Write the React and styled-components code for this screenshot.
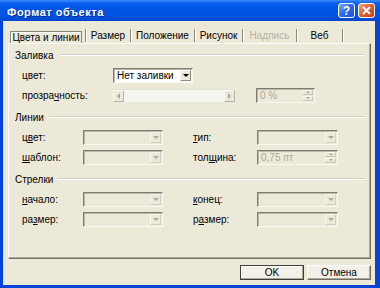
import React from 'react'
import styled, { createGlobalStyle } from 'styled-components'

const GlobalStyle = createGlobalStyle`
  html, body { margin: 0; padding: 0; background: #fff; }
  body { font-family: "Liberation Sans", Arial, sans-serif; font-size: 10px; color: #000; }
`

const Window = styled.div`
  width: 380px;
  height: 288px;
  display: flex;
  flex-direction: column;
  background: #0842D6;
`

const TitleBar = styled.div`
  height: 21px;
  flex: none;
  display: flex;
  align-items: center;
  padding: 0 5px 0 7px;
  background: linear-gradient(180deg, #3D8BF7 0%, #0A5FEF 15%, #0055E5 40%, #0053E2 75%, #0245CC 100%);
  color: #fff;
`

const Title = styled.div`
  flex: 1;
  padding-top: 3px;
  font: bold 11px "Liberation Sans", Arial, sans-serif;
  letter-spacing: 0.5px;
  text-shadow: 1px 1px 0 #0B2A8F;
`

const CaptionButton = styled.div`
  width: 17px;
  height: 15px;
  margin-left: 3px;
  box-sizing: border-box;
  border: 1px solid #fff;
  border-radius: 3px;
  display: flex;
  align-items: center;
  justify-content: center;
  color: #fff;
  font: bold 12px "Liberation Sans", Arial, sans-serif;
  background: ${p => p.$close
    ? 'linear-gradient(135deg, #F4A183 0%, #E2602F 45%, #C63C1B 100%)'
    : 'linear-gradient(135deg, #7FB0FF 0%, #2E6EF2 45%, #1B4FD8 100%)'};
`

const Frame = styled.div`
  flex: 1;
  display: flex;
  flex-direction: column;
  margin: 0 5px 3px 3px;
  padding: 7px 4px 5px 5px;
  background: #ECE9D8;
`

const TabRow = styled.div`
  height: 15px;
  flex: none;
  display: flex;
`

const Tab = styled.div`
  width: ${p => p.$w}px;
  height: 13px;
  margin-top: 1px;
  box-sizing: border-box;
  display: flex;
  align-items: center;
  justify-content: center;
  border-right: 1px solid #8C8A7E;
  box-shadow: 1px 0 0 #fff;
  color: ${p => p.$disabled ? '#B5B2A3' : '#000'};
  white-space: nowrap;
`

const TabLabel = styled.span`
  ${p => p.$active && `
    flex: 1;
    align-self: stretch;
    margin: 2px 3px -2px 2px;
    border: 1px solid #8A887C;
    box-shadow: inset 1px 1px 0 #fff;
    text-align: center;
    line-height: 11px;
  `}
`

const Panel = styled.div`
  flex: 1;
  box-sizing: border-box;
  padding: 5px 5px 0 6px;
  border-left: 1px solid #fff;
  border-top: 1px solid #fff;
  border-right: 1px solid #716F64;
  border-bottom: 1px solid #716F64;
  box-shadow: inset -1px -1px 0 #ACA899;
`

const Group = styled.div`
  margin-bottom: 6px;
`

const GroupHeader = styled.div`
  height: 12px;
  margin-bottom: 4px;
  display: flex;
  align-items: center;
  gap: 5px;
  &::after {
    content: '';
    flex: 1;
    border-top: 1px solid #D0CEBF;
    border-bottom: 1px solid #fff;
  }
`

const Row = styled.div`
  height: 20px;
  padding-left: 7px;
  display: grid;
  grid-template-columns: ${p => p.$cols};
  align-items: center;
`

const Label = styled.span`
  white-space: nowrap;
`

const Box = styled.div`
  width: ${p => p.$w}px;
  height: 15px;
  box-sizing: border-box;
  display: flex;
  border: 1px solid;
  border-color: #7F7D72 #FAF9F4 #FAF9F4 #7F7D72;
  box-shadow: inset 1px 1px 0 #B9B6A7;
  background: ${p => p.$disabled ? '#ECE9D8' : '#fff'};
  color: ${p => p.$disabled ? '#ACA899' : '#000'};
`

const BoxText = styled.span`
  flex: 1;
  padding: 0 3px;
  line-height: 13px;
  white-space: nowrap;
  overflow: hidden;
`

const ArrowButton = styled.span`
  width: 11px;
  margin: 1px 1px 1px 0;
  box-sizing: border-box;
  display: flex;
  align-items: center;
  justify-content: center;
  border: 1px solid;
  border-color: ${p => p.$disabled ? '#F7F6F0 #D2CFC1 #D2CFC1 #F7F6F0' : '#fff #8E8C80 #8E8C80 #fff'};
  background: #ECE9D8;
  &::before {
    content: '';
    border-left: 3px solid transparent;
    border-right: 3px solid transparent;
    border-top: 3px solid ${p => p.$disabled ? '#ACA899' : '#000'};
  }
`

const SpinButtons = styled.span`
  width: 11px;
  margin: 1px 1px 1px 0;
  display: flex;
  flex-direction: column;
  gap: 1px;
`

const SpinHalf = styled.span`
  flex: 1;
  box-sizing: border-box;
  display: flex;
  align-items: center;
  justify-content: center;
  border: 1px solid;
  border-color: #F7F6F0 #C9C6B8 #C9C6B8 #F7F6F0;
  &::before {
    content: '';
    border-left: 2px solid transparent;
    border-right: 2px solid transparent;
    ${p => p.$down ? 'border-top' : 'border-bottom'}: 2px solid #ACA899;
  }
`

const Scroll = styled.div`
  width: 122px;
  height: 13px;
  display: flex;
  justify-content: space-between;
  background: #F6F5EF;
  border-top: 1px solid #E4E1D4;
  box-sizing: border-box;
`

const ScrollButton = styled.span`
  width: 11px;
  box-sizing: border-box;
  display: flex;
  align-items: center;
  justify-content: center;
  background: #ECE9D8;
  border: 1px solid;
  border-color: #FBFAF6 #B6B3A4 #B6B3A4 #FBFAF6;
  &::before {
    content: '';
    border-top: 3px solid transparent;
    border-bottom: 3px solid transparent;
    ${p => p.$right ? 'border-left' : 'border-right'}: 3px solid #ACA899;
  }
`

const ButtonRow = styled.div`
  height: 15px;
  margin-top: 6px;
  flex: none;
  display: flex;
  justify-content: flex-end;
  gap: 3px;
`

const Button = styled.div`
  width: 64px;
  height: 15px;
  box-sizing: border-box;
  display: flex;
  align-items: center;
  justify-content: center;
  background: #F2F0E7;
  border: 1px solid;
  border-color: ${p => p.$default ? '#3F3E38' : '#fff #716F64 #716F64 #fff'};
  box-shadow: inset -1px -1px 0 #ACA899${p => p.$default ? ', inset 1px 1px 0 #fff' : ''};
`

function Combo({ w = 80, text = '', disabled }) {
  return (
    <Box $w={w} $disabled={disabled}>
      <BoxText>{text}</BoxText>
      <ArrowButton $disabled={disabled} />
    </Box>
  )
}

function Spin({ w, text }) {
  return (
    <Box $w={w} $disabled>
      <BoxText>{text}</BoxText>
      <SpinButtons>
        <SpinHalf />
        <SpinHalf $down />
      </SpinButtons>
    </Box>
  )
}

const lineCols = '61px 80px 30px 64px 81px'

export default function App() {
  return (
    <>
      <GlobalStyle />
      <Window>
        <TitleBar>
          <Title>Формат объекта</Title>
          <CaptionButton>?</CaptionButton>
          <CaptionButton $close>
            <svg width="9" height="9" viewBox="0 0 9 9">
              <path d="M1 1 L8 8 M8 1 L1 8" stroke="#fff" strokeWidth="2" />
            </svg>
          </CaptionButton>
        </TitleBar>
        <Frame>
          <TabRow>
            <Tab $w={78}><TabLabel $active>Цвета и линии</TabLabel></Tab>
            <Tab $w={45}><TabLabel>Размер</TabLabel></Tab>
            <Tab $w={64}><TabLabel>Положение</TabLabel></Tab>
            <Tab $w={48}><TabLabel>Рисунок</TabLabel></Tab>
            <Tab $w={54} $disabled><TabLabel>Надпись</TabLabel></Tab>
            <Tab $w={46}><TabLabel>Веб</TabLabel></Tab>
          </TabRow>
          <Panel>
            <Group>
              <GroupHeader>Заливка</GroupHeader>
              <Row $cols="91px 80px">
                <Label>цвет:</Label>
                <Combo text="Нет заливки" />
              </Row>
              <Row $cols="91px 122px 21px 59px">
                <Label>прозра<u>ч</u>ность:</Label>
                <Scroll>
                  <ScrollButton />
                  <ScrollButton $right />
                </Scroll>
                <span />
                <Spin w={59} text="0 %" />
              </Row>
            </Group>
            <Group>
              <GroupHeader>Линии</GroupHeader>
              <Row $cols={lineCols}>
                <Label>ц<u>в</u>ет:</Label>
                <Combo disabled />
                <span />
                <Label><u>т</u>ип:</Label>
                <Combo w={81} disabled />
              </Row>
              <Row $cols={lineCols}>
                <Label><u>ш</u>аблон:</Label>
                <Combo disabled />
                <span />
                <Label>тол<u>щ</u>ина:</Label>
                <Spin w={81} text="0,75 пт" />
              </Row>
            </Group>
            <Group>
              <GroupHeader>Стрелки</GroupHeader>
              <Row $cols={lineCols}>
                <Label><u>н</u>ачало:</Label>
                <Combo disabled />
                <span />
                <Label><u>к</u>онец:</Label>
                <Combo w={81} disabled />
              </Row>
              <Row $cols={lineCols}>
                <Label>ра<u>з</u>мер:</Label>
                <Combo disabled />
                <span />
                <Label>р<u>а</u>змер:</Label>
                <Combo w={81} disabled />
              </Row>
            </Group>
          </Panel>
          <ButtonRow>
            <Button $default>OK</Button>
            <Button>Отмена</Button>
          </ButtonRow>
        </Frame>
      </Window>
    </>
  )
}
